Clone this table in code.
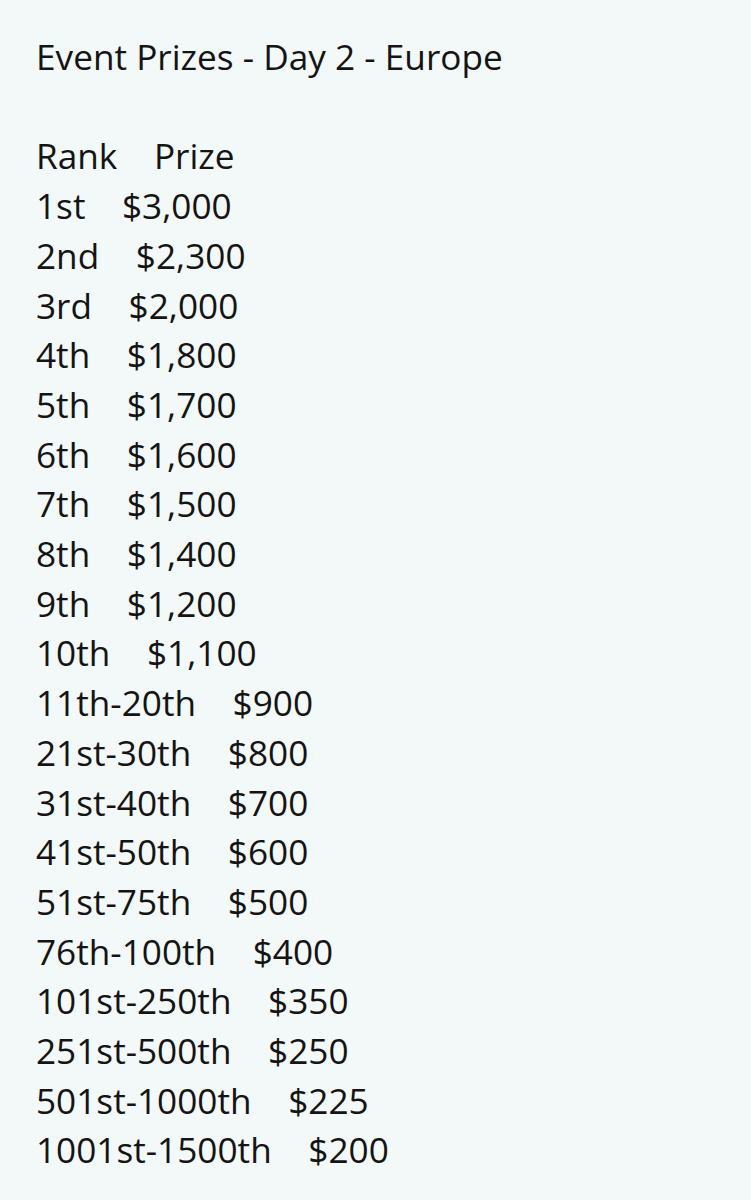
const prizes: [string, string][] = [
  ["1st", "$3,000"],
  ["2nd", "$2,300"],
  ["3rd", "$2,000"],
  ["4th", "$1,800"],
  ["5th", "$1,700"],
  ["6th", "$1,600"],
  ["7th", "$1,500"],
  ["8th", "$1,400"],
  ["9th", "$1,200"],
  ["10th", "$1,100"],
  ["11th-20th", "$900"],
  ["21st-30th", "$800"],
  ["31st-40th", "$700"],
  ["41st-50th", "$600"],
  ["51st-75th", "$500"],
  ["76th-100th", "$400"],
  ["101st-250th", "$350"],
  ["251st-500th", "$250"],
  ["501st-1000th", "$225"],
  ["1001st-1500th", "$200"],
]

export default function App() {
  return (
    <div className="min-h-[1200px] w-full bg-[#f3f8f8] pt-[32px] pl-[36px] text-[35.2px] leading-[49.7px] text-[#141414] font-['Open_Sans',sans-serif]">
      <p>Event Prizes - Day 2 - Europe</p>
      <p>&nbsp;</p>
      <p className="whitespace-pre">Rank    Prize</p>
      {prizes.map(([rank, prize]) => (
        <p key={rank} className="whitespace-pre">
          {rank}    {prize}
        </p>
      ))}
    </div>
  )
}
